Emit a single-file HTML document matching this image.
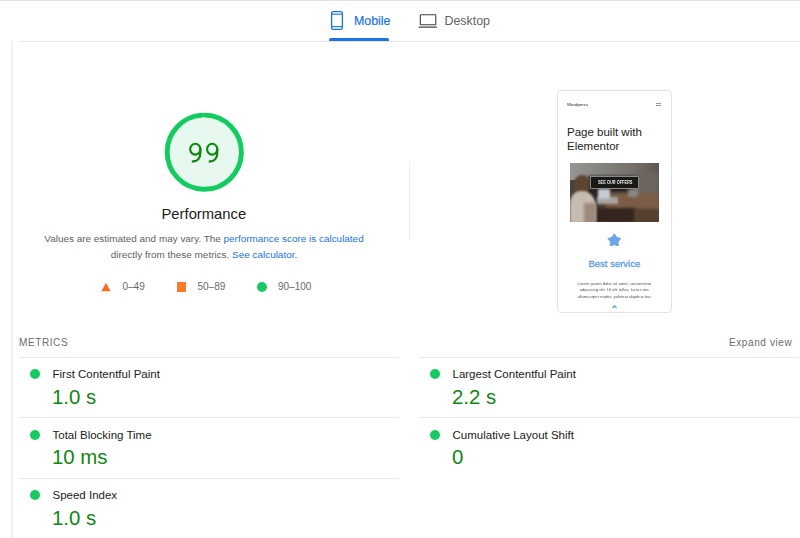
<!DOCTYPE html>
<html><head><meta charset="utf-8">
<style>
*{margin:0;padding:0;box-sizing:border-box}
html,body{width:800px;height:538px;overflow:hidden;background:#fff;font-family:"Liberation Sans",sans-serif}
.a{position:absolute;white-space:nowrap;line-height:1}
.hl{position:absolute;height:1px;background:#e8e8e8}
.vl{position:absolute;width:1px;background:#ececec}
.dot{position:absolute;width:10px;height:10px;border-radius:50%;background:#16cb62}
.lbl{font-size:11.5px;color:#212121}
.val{font-size:20.4px;color:#0f870f}
</style></head><body>
<!-- top border -->
<div class="hl" style="left:0;top:0;width:800px;background:#dfe2e6"></div>

<!-- tabs -->
<svg class="a" style="left:330px;top:10px" width="14" height="21" viewBox="0 0 14 21">
  <rect x="1.6" y="1.6" width="10.8" height="17.8" rx="1.6" fill="none" stroke="#1a73e8" stroke-width="1.3"/>
  <line x1="1.6" y1="4.2" x2="12.4" y2="4.2" stroke="#1a73e8" stroke-width="1.1"/>
  <line x1="1.6" y1="16.6" x2="12.4" y2="16.6" stroke="#1a73e8" stroke-width="1.1"/>
</svg>
<div class="a" style="left:354px;top:14.7px;font-size:12.4px;color:#1a73e8;-webkit-text-stroke:0.2px #1a73e8">Mobile</div>
<div class="a" style="left:329px;top:38px;width:60px;height:2.7px;background:#1a73e8;border-radius:2px 2px 0 0"></div>

<svg class="a" style="left:418px;top:13px" width="20" height="16" viewBox="0 0 20 16">
  <rect x="2.3" y="1.7" width="15.5" height="10.1" rx="0.8" fill="none" stroke="#3c4043" stroke-width="1.1"/>
  <line x1="0.7" y1="14.1" x2="18.8" y2="14.1" stroke="#3c4043" stroke-width="1.2"/>
</svg>
<div class="a" style="left:444.5px;top:14.5px;font-size:12.4px;color:#5f6368">Desktop</div>

<div class="hl" style="left:19px;top:41px;width:780px;background:#e6e6e6"></div>
<div class="vl" style="left:11px;width:2px;top:41px;height:497px;background:#f1f1f1"></div>

<!-- gauge -->
<svg class="a" style="left:164px;top:112px" width="81" height="81" viewBox="0 0 81 81">
  <circle cx="40.3" cy="40.2" r="37.1" fill="#e7f8ee"/>
  <circle cx="40.3" cy="40.2" r="37.1" fill="none" stroke="#12cc60" stroke-width="4.9" stroke-linecap="round" stroke-dasharray="229.7 3.4" transform="rotate(-88.9 40.3 40.2)"/>
</svg>
<svg class="a" style="left:180px;top:135px" width="50" height="35" viewBox="180 135 50 35">
  <g fill="none" stroke="#0a870a" stroke-width="2.1" stroke-linecap="butt">
    <ellipse cx="195.3" cy="149.2" rx="5.1" ry="5.4"/>
    <path d="M200.4 148.5 L200.4 153 C200.4 158.5 197.2 161.4 191.8 161.6"/>
    <ellipse cx="212.2" cy="149.2" rx="5.1" ry="5.4"/>
    <path d="M217.3 148.5 L217.3 153 C217.3 158.5 214.1 161.4 208.7 161.6"/>
  </g>
</svg>
<div class="a" style="left:161.5px;top:207px;font-size:14.8px;color:#202020">Performance</div>

<div class="a" style="left:0;width:408px;text-align:center;top:233.5px;font-size:9.93px;color:#616161;">Values are estimated and may vary. The <span style="color:#1a73e8">performance score is calculated</span></div>
<div class="a" style="left:0;width:408px;text-align:center;top:250px;font-size:9.93px;color:#616161;">directly from these metrics. <span style="color:#1a73e8">See calculator.</span></div>

<!-- legend -->
<svg class="a" style="left:101px;top:282px" width="10" height="10" viewBox="0 0 10 10"><polygon points="5,0.7 9.7,9.3 0.3,9.3" fill="#fa6b25"/></svg>
<div class="a" style="left:122.5px;top:282px;font-size:10px;color:#6a6a6a">0–49</div>
<div class="a" style="left:176.5px;top:282px;width:9.5px;height:9.5px;background:#fa7a2a"></div>
<div class="a" style="left:197.5px;top:282px;font-size:10px;color:#6a6a6a">50–89</div>
<div class="a" style="left:257px;top:282px;width:10px;height:10px;border-radius:50%;background:#18c964"></div>
<div class="a" style="left:278px;top:282px;font-size:10px;color:#6a6a6a">90–100</div>

<div class="vl" style="left:409px;top:161px;height:79px;background:#efefef"></div>

<!-- thumbnail -->
<div class="a" style="left:556.5px;top:90px;width:115.5px;height:223px;border:1px solid #e3e3e3;border-radius:4px;background:#fff"></div>
<div class="a" style="left:566.8px;top:101.8px;font-size:8.8px;color:#222;transform:scale(0.5);transform-origin:0 0">Wordpress</div>
<div class="a" style="left:656px;top:103px;width:5px;height:1px;background:#999"></div>
<div class="a" style="left:656px;top:105.4px;width:5px;height:1px;background:#999"></div>
<div class="a" style="left:567px;top:125px;font-size:11.5px;line-height:14px;color:#222;white-space:normal;width:100px">Page built with Elementor</div>
<div class="a" style="left:569.5px;top:163px;width:89.5px;height:58.5px;overflow:hidden;background:#4a423c">
  <div style="position:absolute;left:0;top:0;width:90px;height:17px;background:linear-gradient(90deg,#979694 0%,#81807c 40%,#75706b 70%,#5e5650 100%)"></div>
  <div style="position:absolute;left:18px;top:13px;width:52px;height:16px;background:#26211d;filter:blur(1.5px)"></div>
  <div style="position:absolute;left:64px;top:10px;width:26px;height:28px;background:#6d655f;filter:blur(2px)"></div>
  <div style="position:absolute;left:36px;top:30px;width:54px;height:18px;background:#7a5c47;filter:blur(1.5px)"></div>
  <div style="position:absolute;left:58px;top:26px;width:10px;height:8px;background:#8b8784;filter:blur(1.5px)"></div>
  <div style="position:absolute;left:20px;top:45px;width:46px;height:14px;background:#33251d;filter:blur(1.5px)"></div>
  <div style="position:absolute;left:64px;top:46px;width:26px;height:14px;background:#55402f;filter:blur(1.5px)"></div>
  <div style="position:absolute;left:18px;top:25px;width:10px;height:34px;background:#2a2420;filter:blur(1.2px)"></div>
  <div style="position:absolute;left:27px;top:34px;width:21px;height:7px;background:#a9a39e;filter:blur(1.2px)"></div>
  <div style="position:absolute;left:28.5px;top:26px;width:12px;height:10px;background:#c3cad1;filter:blur(0.8px)"></div>
  <div style="position:absolute;left:4px;top:12px;width:16px;height:20px;border-radius:45%;background:#5d4433;filter:blur(1.2px)"></div>
  <div style="position:absolute;left:0px;top:28px;width:26px;height:32px;border-radius:40% 50% 0 0;background:#c6bcaf;filter:blur(1.2px)"></div>
  <div style="position:absolute;left:14px;top:40px;width:12px;height:20px;background:#9c8a7a;filter:blur(1.5px)"></div>
</div>
<div class="a" style="left:589.5px;top:176px;width:49.5px;height:13px;background:#1a1816;border:1px solid #8a8a88;border-radius:1px"></div>
<div class="a" style="left:597.5px;top:179.8px;font-size:10px;color:#e8e8e8;font-weight:bold;transform:scale(0.39,0.5);transform-origin:0 0">SEE OUR OFFERS</div>
<svg class="a" style="left:607px;top:232.6px" width="14.6" height="13.6" viewBox="0 0 24 23"><polygon points="12.00,1.30 16.06,7.22 22.94,9.25 18.56,14.93 18.76,22.10 12.00,19.70 5.24,22.10 5.44,14.93 1.06,9.25 7.94,7.22" fill="#6ea3ea" stroke="#6ea3ea" stroke-width="1.5" stroke-linejoin="round"/></svg>
<div class="a" style="left:588.5px;top:259px;font-size:9.5px;color:#5b9be6;-webkit-text-stroke:0.3px #5b9be6">Best service</div>
<div class="a" style="left:576px;top:279.9px;font-size:8.3px;line-height:13.1px;color:#555;text-align:center;width:154px;white-space:normal;transform:scale(0.5);transform-origin:0 0">Lorem ipsum dolor sit amet, consectetur adipiscing elit. Ut elit tellus, luctus nec ullamcorper mattis, pulvinar dapibus leo.</div>
<svg class="a" style="left:612px;top:305px" width="5" height="3.5" viewBox="0 0 5 3.5"><path d="M0.5 3.2 L2.5 0.8 L4.5 3.2" fill="none" stroke="#5b9be6" stroke-width="1.2"/></svg>

<!-- metrics -->
<div class="a" style="left:19px;top:337.6px;font-size:10px;letter-spacing:0.6px;color:#6b6b6b">METRICS</div>
<div class="a" style="left:729px;top:337.6px;font-size:10px;letter-spacing:0.6px;color:#6b6b6b">Expand view</div>

<div class="hl" style="left:19px;top:357px;width:380px"></div>
<div class="hl" style="left:419px;top:357px;width:380px"></div>
<div class="hl" style="left:19px;top:417px;width:380px"></div>
<div class="hl" style="left:419px;top:417px;width:380px"></div>
<div class="hl" style="left:19px;top:478px;width:380px"></div>

<div class="dot" style="left:30.2px;top:369px"></div>
<div class="a lbl" style="left:52.5px;top:368.5px">First Contentful Paint</div>
<div class="a val" style="left:52px;top:386.5px">1.0 s</div>

<div class="dot" style="left:30.2px;top:430px"></div>
<div class="a lbl" style="left:52.5px;top:429.5px">Total Blocking Time</div>
<div class="a val" style="left:52px;top:447.0px">10 ms</div>

<div class="dot" style="left:30.2px;top:490px"></div>
<div class="a lbl" style="left:52.5px;top:489.5px">Speed Index</div>
<div class="a val" style="left:52px;top:507.5px">1.0 s</div>

<div class="dot" style="left:430.2px;top:369px"></div>
<div class="a lbl" style="left:452.5px;top:368.5px">Largest Contentful Paint</div>
<div class="a val" style="left:452px;top:386.5px">2.2 s</div>

<div class="dot" style="left:430.2px;top:430px"></div>
<div class="a lbl" style="left:452.5px;top:429.5px">Cumulative Layout Shift</div>
<div class="a val" style="left:452px;top:447.0px">0</div>
</body></html>
